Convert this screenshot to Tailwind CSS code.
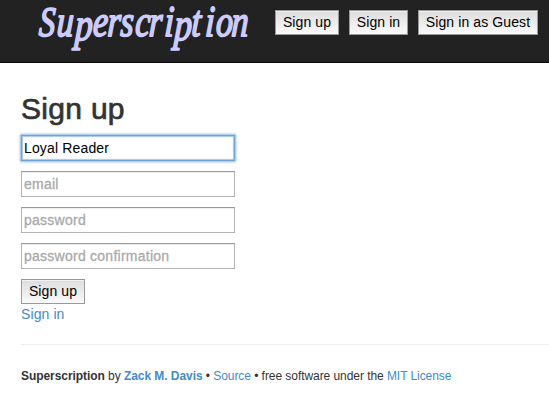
<!DOCTYPE html>
<html lang="en">
<head>
<meta charset="utf-8">
<title>Superscription</title>
<script src="https://cdn.jsdelivr.net/npm/@tailwindcss/browser@4"></script>
</head>
<body class="h-[400px] overflow-hidden bg-white font-['Liberation_Sans',sans-serif] text-sm leading-5 text-[#333]">
<header class="flex h-[63px] items-start border-b border-[#080808] bg-[#222] pl-[21px]">
  <svg class="h-[62px] w-[254px] shrink-0 overflow-visible" viewBox="21 0 254 62" role="img" aria-label="Superscription">
    <g transform="translate(0 36) skewX(-3) scale(.77 1)" fill="#ccccff" stroke="#ccccff" stroke-width="1.8" stroke-linejoin="round" font-family="'Liberation Serif',serif" font-style="italic" font-size="44">
      <text x="50 73 97 120 139 156 175 193 213 226 248 266 280 300" y="0"><tspan font-size="42">S</tspan>u<tspan font-size="46" dy="3.5">p</tspan><tspan dy="-3.5">erscri</tspan><tspan font-size="46" dy="3.5">p</tspan><tspan dy="-3.5">tion</tspan></text>
    </g>
  </svg>
  <nav class="mt-[10px] flex gap-[10px] text-black">
    <button class="h-[25px] w-16 border border-[#999] bg-linear-to-b from-[#ddd] to-[#fafafa] pb-px leading-5 tracking-[0.1px] shadow-[inset_0_1px_0_#f2f2f2]">Sign up</button>
    <button class="h-[25px] w-[59px] border border-[#999] bg-linear-to-b from-[#ddd] to-[#fafafa] pb-px leading-5 tracking-[0.1px] shadow-[inset_0_1px_0_#f2f2f2]">Sign in</button>
    <button class="h-[25px] w-[120px] border border-[#999] bg-linear-to-b from-[#ddd] to-[#fafafa] pb-px leading-5 tracking-[0.1px] shadow-[inset_0_1px_0_#f2f2f2]">Sign in as Guest</button>
  </nav>
</header>
<main class="pl-[21px]">
  <h1 class="pt-[29px] text-[30px] leading-[33px] font-normal tracking-[0.3px] [-webkit-text-stroke:0.7px_#333]">Sign up</h1>
  <form class="mt-[10px] flex w-[214px] flex-col gap-[10px]">
    <input type="text" value="Loyal Reader" class="h-[26px] border border-[#6fa3d4] px-0.5 tracking-[0.15px] text-black shadow-[0_0_2px_1px_#8bb8e3,inset_0_0_1px_1px_#a5c7e8] outline-none">
    <input type="text" placeholder="email" class="h-[26px] border border-[#b3b3b3] border-t-[#999] px-0.5 tracking-[0.25px] shadow-[inset_0_1px_0_#eee] placeholder:text-[#a9a9a9] placeholder:[-webkit-text-stroke:0.3px_#a9a9a9]">
    <input type="password" placeholder="password" class="h-[26px] border border-[#b3b3b3] border-t-[#999] px-0.5 tracking-[0.25px] shadow-[inset_0_1px_0_#eee] placeholder:text-[#a9a9a9] placeholder:[-webkit-text-stroke:0.3px_#a9a9a9]">
    <input type="password" placeholder="password confirmation" class="h-[26px] border border-[#b3b3b3] border-t-[#999] px-0.5 tracking-[0.25px] shadow-[inset_0_1px_0_#eee] placeholder:text-[#a9a9a9] placeholder:[-webkit-text-stroke:0.3px_#a9a9a9]">
    <button type="button" class="h-[25px] w-16 border border-[#999] bg-linear-to-b from-[#ddd] to-[#fafafa] pb-px leading-5 tracking-[0.1px] text-black shadow-[inset_0_1px_0_#f2f2f2]">Sign up</button>
  </form>
  <a href="#" class="block w-fit tracking-[0.1px] text-[#428bca]">Sign in</a>
  <footer class="mt-5 border-t border-[#eee] pt-[22px] text-xs leading-[18px] tracking-[-0.06px] whitespace-nowrap">
    <strong>Superscription</strong> by <a href="#" class="font-bold text-[#428bca]">Zack M. Davis</a> • <a href="#" class="text-[#428bca]">Source</a> • free software under the <a href="#" class="text-[#428bca]">MIT License</a>
  </footer>
</main>
</body>
</html>
